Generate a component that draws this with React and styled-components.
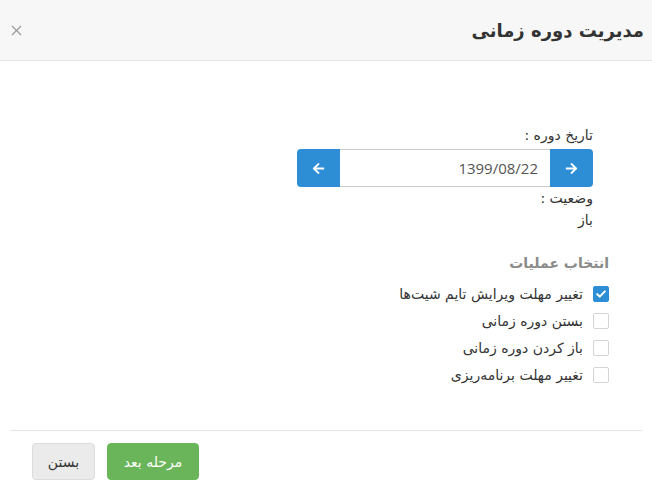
import React from "react";
import styled, { createGlobalStyle } from "styled-components";

const Global = createGlobalStyle`
  html, body { margin: 0; padding: 0; background: #fff; }
  body { font-family: "DejaVu Sans", "Noto Sans", sans-serif; color: #333; }
  * { box-sizing: border-box; }
`;

const Modal = styled.div`
  width: 652px;
  height: 504px;
  background: #fff;
  display: flex;
  flex-direction: column;
`;

const Header = styled.div`
  height: 61px;
  background: #f7f7f7;
  border-bottom: 1px solid #e5e5e5;
  display: flex;
  align-items: center;
  justify-content: space-between;
  padding: 0 8px 0 9px;
`;

const Title = styled.h4`
  margin: 0;
  font-size: 18px;
  font-weight: bold;
  color: #333;
`;

const Close = styled.button`
  border: 0;
  background: transparent;
  padding: 0;
  width: 14px;
  height: 14px;
  display: flex;
  align-items: center;
  justify-content: center;
  cursor: pointer;
`;

const Body = styled.div`
  flex: 1;
  padding: 63px 43px 0 0;
  display: flex;
  flex-direction: column;
  align-items: flex-start;
`;

const FormBlock = styled.div`
  width: 296px;
  margin-right: 16px;
  display: flex;
  flex-direction: column;
`;

const Line = styled.div`
  font-size: 14px;
  line-height: 22px;
  color: #333;
  margin-bottom: ${(p) => p.$mb || 0}px;
`;

const DateGroup = styled.div`
  display: flex;
  height: 38px;
`;

const ArrowBtn = styled.button`
  width: 43px;
  height: 38px;
  border: 0;
  background: #2d8ed6;
  display: flex;
  align-items: center;
  justify-content: center;
  padding: 0;
  border-radius: ${(p) => (p.$side === "right" ? "0 4px 4px 0" : "4px 0 0 4px")};
`;

const DateInput = styled.div`
  flex: 1;
  border-top: 1px solid #ccc;
  border-bottom: 1px solid #ccc;
  display: flex;
  align-items: center;
  padding-right: 12px;
  font-family: "Open Sans", "DejaVu Sans", sans-serif;
  font-size: 15px;
  color: #555;
`;

const Ops = styled.div`
  margin-top: 21px;
  display: flex;
  flex-direction: column;
`;

const OpsTitle = styled.div`
  font-size: 14px;
  font-weight: bold;
  line-height: 22px;
  color: #8a8a8a;
  margin-bottom: 6px;
`;

const Row = styled.label`
  height: 27px;
  display: flex;
  align-items: center;
  gap: 10px;
  font-size: 14px;
  color: #333;
`;

const Box = styled.span`
  width: 16px;
  height: 16px;
  border-radius: 2px;
  border: 1px solid ${(p) => (p.$checked ? "#2d8ed6" : "#d5d5d5")};
  background: ${(p) => (p.$checked ? "#2d8ed6" : "#fff")};
  display: flex;
  align-items: center;
  justify-content: center;
`;

const Footer = styled.div`
  margin: 0 10px;
  border-top: 1px solid #e5e5e5;
  height: 74px;
  display: flex;
  align-items: flex-start;
  justify-content: flex-end;
  gap: 12px;
  padding: 12px 22px 0 22px;
`;

const Btn = styled.button`
  height: 37px;
  padding: 0 14px;
  border-radius: 4px;
  font-family: inherit;
  font-size: 14px;
  cursor: pointer;
  border: 1px solid ${(p) => (p.$primary ? "#6ab55a" : "#dcdcdc")};
  background: ${(p) => (p.$primary ? "#6ab55a" : "#ebebeb")};
  color: ${(p) => (p.$primary ? "#fff" : "#333")};
  min-width: ${(p) => p.$w}px;
`;

const Arrow = ({ dir }) => (
  <svg width="13" height="13" viewBox="0 0 448 512" style={{ transform: dir === "right" ? "scaleX(-1)" : "none" }}>
    <path
      fill="#fff"
      d="M257.5 445.1l-22.2 22.2c-9.4 9.4-24.6 9.4-33.9 0L7 273c-9.4-9.4-9.4-24.6 0-33.9L201.4 44.7c9.4-9.4 24.6-9.4 33.9 0l22.2 22.2c9.5 9.5 9.3 25-.4 34.3L136.6 216H424c13.3 0 24 10.7 24 24v32c0 13.3-10.7 24-24 24H136.6l120.5 114.8c9.8 9.3 10 24.8.4 34.3z"
    />
  </svg>
);

const Check = () => (
  <svg width="10" height="8" viewBox="0 0 10 8">
    <path d="M1.2 4.2 L3.8 6.6 L8.8 1.4" fill="none" stroke="#fff" strokeWidth="2" strokeLinecap="round" strokeLinejoin="round" />
  </svg>
);

const ops = [
  { label: "تغییر مهلت ویرایش تایم شیت‌ها", checked: true },
  { label: "بستن دوره زمانی", checked: false },
  { label: "باز کردن دوره زمانی", checked: false },
  { label: "تغییر مهلت برنامه‌ریزی", checked: false },
];

export default function App() {
  return (
    <>
      <Global />
      <Modal dir="rtl">
        <Header>
          <Title>مدیریت دوره زمانی</Title>
          <Close aria-label="close">
            <svg width="11" height="11" viewBox="0 0 11 11">
              <path d="M1 1 L10 10 M10 1 L1 10" stroke="#9a9a9a" strokeWidth="1.2" />
            </svg>
          </Close>
        </Header>
        <Body>
          <FormBlock>
            <Line $mb={3}>تاریخ دوره :</Line>
            <DateGroup>
              <ArrowBtn $side="right"><Arrow dir="right" /></ArrowBtn>
              <DateInput>1399/08/22</DateInput>
              <ArrowBtn $side="left"><Arrow dir="left" /></ArrowBtn>
            </DateGroup>
            <Line>وضعیت :</Line>
            <Line>باز</Line>
          </FormBlock>
          <Ops>
            <OpsTitle>انتخاب عملیات</OpsTitle>
            {ops.map((o) => (
              <Row key={o.label}>
                <Box $checked={o.checked}>{o.checked && <Check />}</Box>
                {o.label}
              </Row>
            ))}
          </Ops>
        </Body>
        <Footer>
          <Btn $primary $w={92}>مرحله بعد</Btn>
          <Btn $w={63}>بستن</Btn>
        </Footer>
      </Modal>
    </>
  );
}
